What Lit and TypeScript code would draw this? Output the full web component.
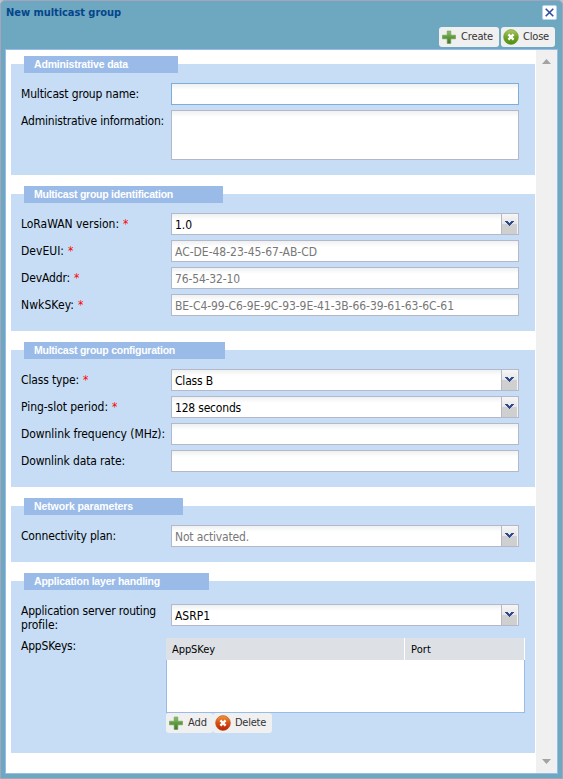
import { LitElement, html, css, svg, nothing } from "lit";
import { customElement, property } from "lit/decorators.js";

type Kind = "text" | "area" | "combo";
interface Field {
  label: string;
  labelWidth: number;
  kind?: Kind;
  required?: boolean;
  value?: string;
  valueWidth?: number;
  muted?: boolean;
  focused?: boolean;
}
interface Section {
  title: string;
  titleWidth: number;
  barWidth: number;
  fields: Field[];
}

const sections: Section[] = [
  {
    title: "Administrative data", titleWidth: 94, barWidth: 154,
    fields: [
      { label: "Multicast group name:", labelWidth: 118, focused: true },
      { label: "Administrative information:", labelWidth: 143, kind: "area" },
    ],
  },
  {
    title: "Multicast group identification", titleWidth: 139, barWidth: 199,
    fields: [
      { label: "LoRaWAN version:", labelWidth: 98, kind: "combo", required: true, value: "1.0", valueWidth: 17 },
      { label: "DevEUI:", labelWidth: 43, required: true, value: "AC-DE-48-23-45-67-AB-CD", valueWidth: 142, muted: true },
      { label: "DevAddr:", labelWidth: 49, required: true, value: "76-54-32-10", valueWidth: 65, muted: true },
      { label: "NwkSKey:", labelWidth: 53, required: true, value: "BE-C4-99-C6-9E-9C-93-9E-41-3B-66-39-61-63-6C-61", valueWidth: 279, muted: true },
    ],
  },
  {
    title: "Multicast group configuration", titleWidth: 141, barWidth: 201,
    fields: [
      { label: "Class type:", labelWidth: 58, kind: "combo", required: true, value: "Class B", valueWidth: 38 },
      { label: "Ping-slot period:", labelWidth: 87, kind: "combo", required: true, value: "128 seconds", valueWidth: 66 },
      { label: "Downlink frequency (MHz):", labelWidth: 144 },
      { label: "Downlink data rate:", labelWidth: 104 },
    ],
  },
  {
    title: "Network parameters", titleWidth: 99, barWidth: 159,
    fields: [
      { label: "Connectivity plan:", labelWidth: 95, kind: "combo", value: "Not activated.", valueWidth: 74, muted: true },
    ],
  },
];

/* One run of text whose tracking is adjusted so that it spans a given width. */
@customElement("fit-text")
class FitText extends LitElement {
  @property() text = "";
  @property({ type: Number }) width = 0;
  static styles = css`
    :host { display: inline-block; white-space: pre; }
    .run { display: inline-block; }
  `;
  render() {
    return html`<span class="run">${this.text}</span>`;
  }
  updated() {
    const run = this.renderRoot.querySelector<HTMLElement>(".run")!;
    run.style.letterSpacing = "0px";
    const natural = run.getBoundingClientRect().width;
    if (this.width && natural) {
      run.style.letterSpacing = `${(this.width - natural) / this.text.length}px`;
    }
  }
}

const fit = (text: string, width: number) => html`<fit-text .text=${text} .width=${width}></fit-text>`;

const plusIcon = html`<svg class="icon" width="16" height="16" viewBox="0 0 16 16">
  <defs><linearGradient id="p" x1="0" y1="0" x2="0" y2="1">
    <stop offset="0" stop-color="#8fbf70" /><stop offset=".5" stop-color="#5f9a3c" /><stop offset="1" stop-color="#41722b" />
  </linearGradient></defs>
  <path d="M6.2 2h3.6v4.2H14.5v3.6H9.8V14.5H6.2V9.8H1.5V6.2H6.2z" fill="url(#p)" stroke="#6a9c50" stroke-width=".6" />
</svg>`;

const discIcon = (id: string, stops: string[], edge: string) => html`<svg class="icon" width="16" height="16" viewBox="0 0 16 16">
  <defs><linearGradient id=${id} x1="0" y1="0" x2="0" y2="1">
    ${stops.map((c, i) => svg`<stop offset=${i / (stops.length - 1)} stop-color=${c} />`)}
  </linearGradient></defs>
  <circle cx="8" cy="8" r="7.4" fill=${`url(#${id})`} stroke=${edge} stroke-width=".6" />
  <path d="M5.4 5.4l5.2 5.2M10.6 5.4l-5.2 5.2" stroke="#fff" stroke-width="2.3" />
</svg>`;
const closeIcon = discIcon("g", ["#b0c868", "#6fa526", "#4f8f10"], "#6c9a34");
const deleteIcon = discIcon("r", ["#f09a3c", "#d9500f", "#b92308"], "#b8501c");

const chevron = html`<svg width="9" height="5" viewBox="0 0 9 5" shape-rendering="crispEdges">
  <path d="M0 0h3v1h1v1h1V1h1V0h3v1H8v1H7v1H6v1H5v1H4V4H3V3H2V2H1V1H0z" fill="#2c4a8c" />
</svg>`;

@customElement("app-root")
class AppRoot extends LitElement {
  static styles = css`
    :host { display: block; width: 563px; height: 779px; background: #b9c4cf; }
    * { box-sizing: border-box; }
    svg { display: block; }
    .window {
      height: 779px; display: flex; flex-direction: column;
      background: #6ea7c0; border: 1px solid #a3a5bd; border-radius: 5px 5px 0 0;
      padding: 0 4px 4px; overflow: hidden; color: #000;
      font: 12px/14px "DejaVu Sans Condensed", Tahoma, sans-serif;
    }
    .titlebar { height: 25px; padding: 0 0 0 1px; display: flex; justify-content: space-between; align-items: flex-start; }
    .title { color: #04468c; font: bold 11px/14px "DejaVu Sans Condensed", sans-serif; padding-top: 5px; }
    .tool { width: 15px; height: 15px; margin: 4px 1px 0 0; border: 1px solid #b9d3ef; border-radius: 2px; background: #fff; display: grid; place-items: center; }
    .toolbar { height: 23px; padding: 1px 3px 0 0; display: flex; justify-content: flex-end; gap: 2px; }
    .btn { height: 20px; border-radius: 3px; background: #f0f0f0; color: #333; font-size: 11px; line-height: 20px; display: flex; align-items: center; }
    .btn .icon { margin: 0 4px 0 2px; flex: none; }
    .create { width: 60px; }
    .create .icon, .close .icon { margin-right: 4px; }
    .close { width: 54px; }
    .add { width: 47px; }
    .delete { width: 59px; }
    .body { flex: 1; min-height: 0; border: 1px solid #99bbe8; background: #fff; display: flex; }
    .form { width: 530px; padding: 6px 0 0 5px; display: flex; flex-direction: column; gap: 11px; }
    .scroll { width: 21px; background: #f0f0f0; display: flex; flex-direction: column; justify-content: space-between; align-items: center; padding: 9px 0 9px; }
    .section { width: 524px; background: linear-gradient(#fff 8px, #c6ddf5 8px); padding-bottom: 15px; }
    .legend { height: 17px; margin-left: 13px; padding-left: 10px; background: #9abbe8; color: #fff; font: bold 10.5px/17px "Liberation Sans", Arial, sans-serif; }
    .fields { padding: 10px 16px 0 10px; display: flex; flex-direction: column; gap: 5px; }
    .row { display: grid; grid-template-columns: 150px 348px; }
    .label { padding-top: 4px; white-space: nowrap; }
    .star { color: #f00; margin-left: 4px; }
    .input { height: 22px; border: 1px solid #b5b8c8; background: linear-gradient(#eef0f1, #fff 6px); padding: 3px 3px 0; line-height: 16px; white-space: nowrap; }
    .input.focused { border-color: #7eadd9; }
    .input.area { height: 50px; }
    .input.muted { color: #777; }
    .input.combo { padding: 0 0 0 3px; display: flex; justify-content: space-between; }
    .input.combo .value { padding-top: 3px; }
    .trigger { width: 17px; border-left: 1px solid #b5b8c8; border-right: 1px solid #f4f4f4; background: linear-gradient(#f6f6f6, #e6e6e6 50%, #d0d0d0 51%, #cfcfcf); display: flex; justify-content: center; padding-top: 7px; }
    .last .fields { padding: 14px 10px 0 10px; gap: 0; }
    .last { padding-bottom: 20px; }
    .last .row { height: 34px; }
    .last .row .label { padding-top: 0; }
    .keys { display: grid; grid-template-columns: 145px 359px; }
    .keys .label { padding-top: 1px; }
    .grid { height: 75px; border: 1px solid #99bbe8; border-top: 0; background: #fff; }
    .head { height: 22px; margin: 0 -1px; display: grid; grid-template-columns: 239px 120px; background: #dde1e6; border-right: 1px solid #fff; }
    .cell { font-size: 11px; line-height: 23px; padding-left: 6px; }
    .cell + .cell { border-left: 1px solid #fff; margin-left: -1px; padding-left: 6px; }
    .actions { display: flex; }
  `;

  field(f: Field) {
    const kind = f.kind ?? "text";
    const value = f.value ? html`<span class="value">${fit(f.value, f.valueWidth!)}</span>` : nothing;
    return html`<div class="row">
      <div class="label">${fit(f.label, f.labelWidth)}${f.required ? html`<span class="star">*</span>` : nothing}</div>
      <div class="input ${kind} ${f.muted ? "muted" : ""} ${f.focused ? "focused" : ""}">
        ${value}${kind === "combo" ? html`<span class="trigger">${chevron}</span>` : nothing}
      </div>
    </div>`;
  }

  legend(title: string, titleWidth: number, barWidth: number) {
    return html`<div class="legend" style="width:${barWidth}px">${fit(title, titleWidth)}</div>`;
  }

  render() {
    return html`<div class="window">
      <div class="titlebar">
        <div class="title">${fit("New multicast group", 115)}</div>
        <div class="tool"><svg width="9" height="9" viewBox="0 0 9 9"><path d="M.7.7l7.6 7.6M8.3.7L.7 8.3" stroke="#2f4f9e" stroke-width="1.6" /></svg></div>
      </div>
      <div class="toolbar">
        <div class="btn create">${plusIcon}${fit("Create", 32)}</div>
        <div class="btn close">${closeIcon}${fit("Close", 26)}</div>
      </div>
      <div class="body">
        <div class="form">
          ${sections.map((s) => html`<div class="section">
            ${this.legend(s.title, s.titleWidth, s.barWidth)}
            <div class="fields">${s.fields.map((f) => this.field(f))}</div>
          </div>`)}
          <div class="section last">
            ${this.legend("Application layer handling", 126, 185)}
            <div class="fields">
              <div class="row">
                <div class="label">${fit("Application server routing", 135)}<br />${fit("profile:", 37)}</div>
                <div class="input combo"><span class="value">${fit("ASRP1", 35)}</span><span class="trigger">${chevron}</span></div>
              </div>
              <div class="keys">
                <div class="label">${fit("AppSKeys:", 55)}</div>
                <div>
                  <div class="grid"><div class="head">
                    <div class="cell">${fit("AppSKey", 43)}</div>
                    <div class="cell">${fit("Port", 20)}</div>
                  </div></div>
                  <div class="actions">
                    <div class="btn add">${plusIcon}${fit("Add", 19)}</div>
                    <div class="btn delete">${deleteIcon}${fit("Delete", 31)}</div>
                  </div>
                </div>
              </div>
            </div>
          </div>
        </div>
        <div class="scroll">
          <svg width="9" height="5" viewBox="0 0 9 5"><path d="M0 5L4.5 0 9 5z" fill="#a3a3a3" /></svg>
          <svg width="9" height="5" viewBox="0 0 9 5"><path d="M0 0L4.5 5 9 0z" fill="#a3a3a3" /></svg>
        </div>
      </div>
    </div>`;
  }
}
